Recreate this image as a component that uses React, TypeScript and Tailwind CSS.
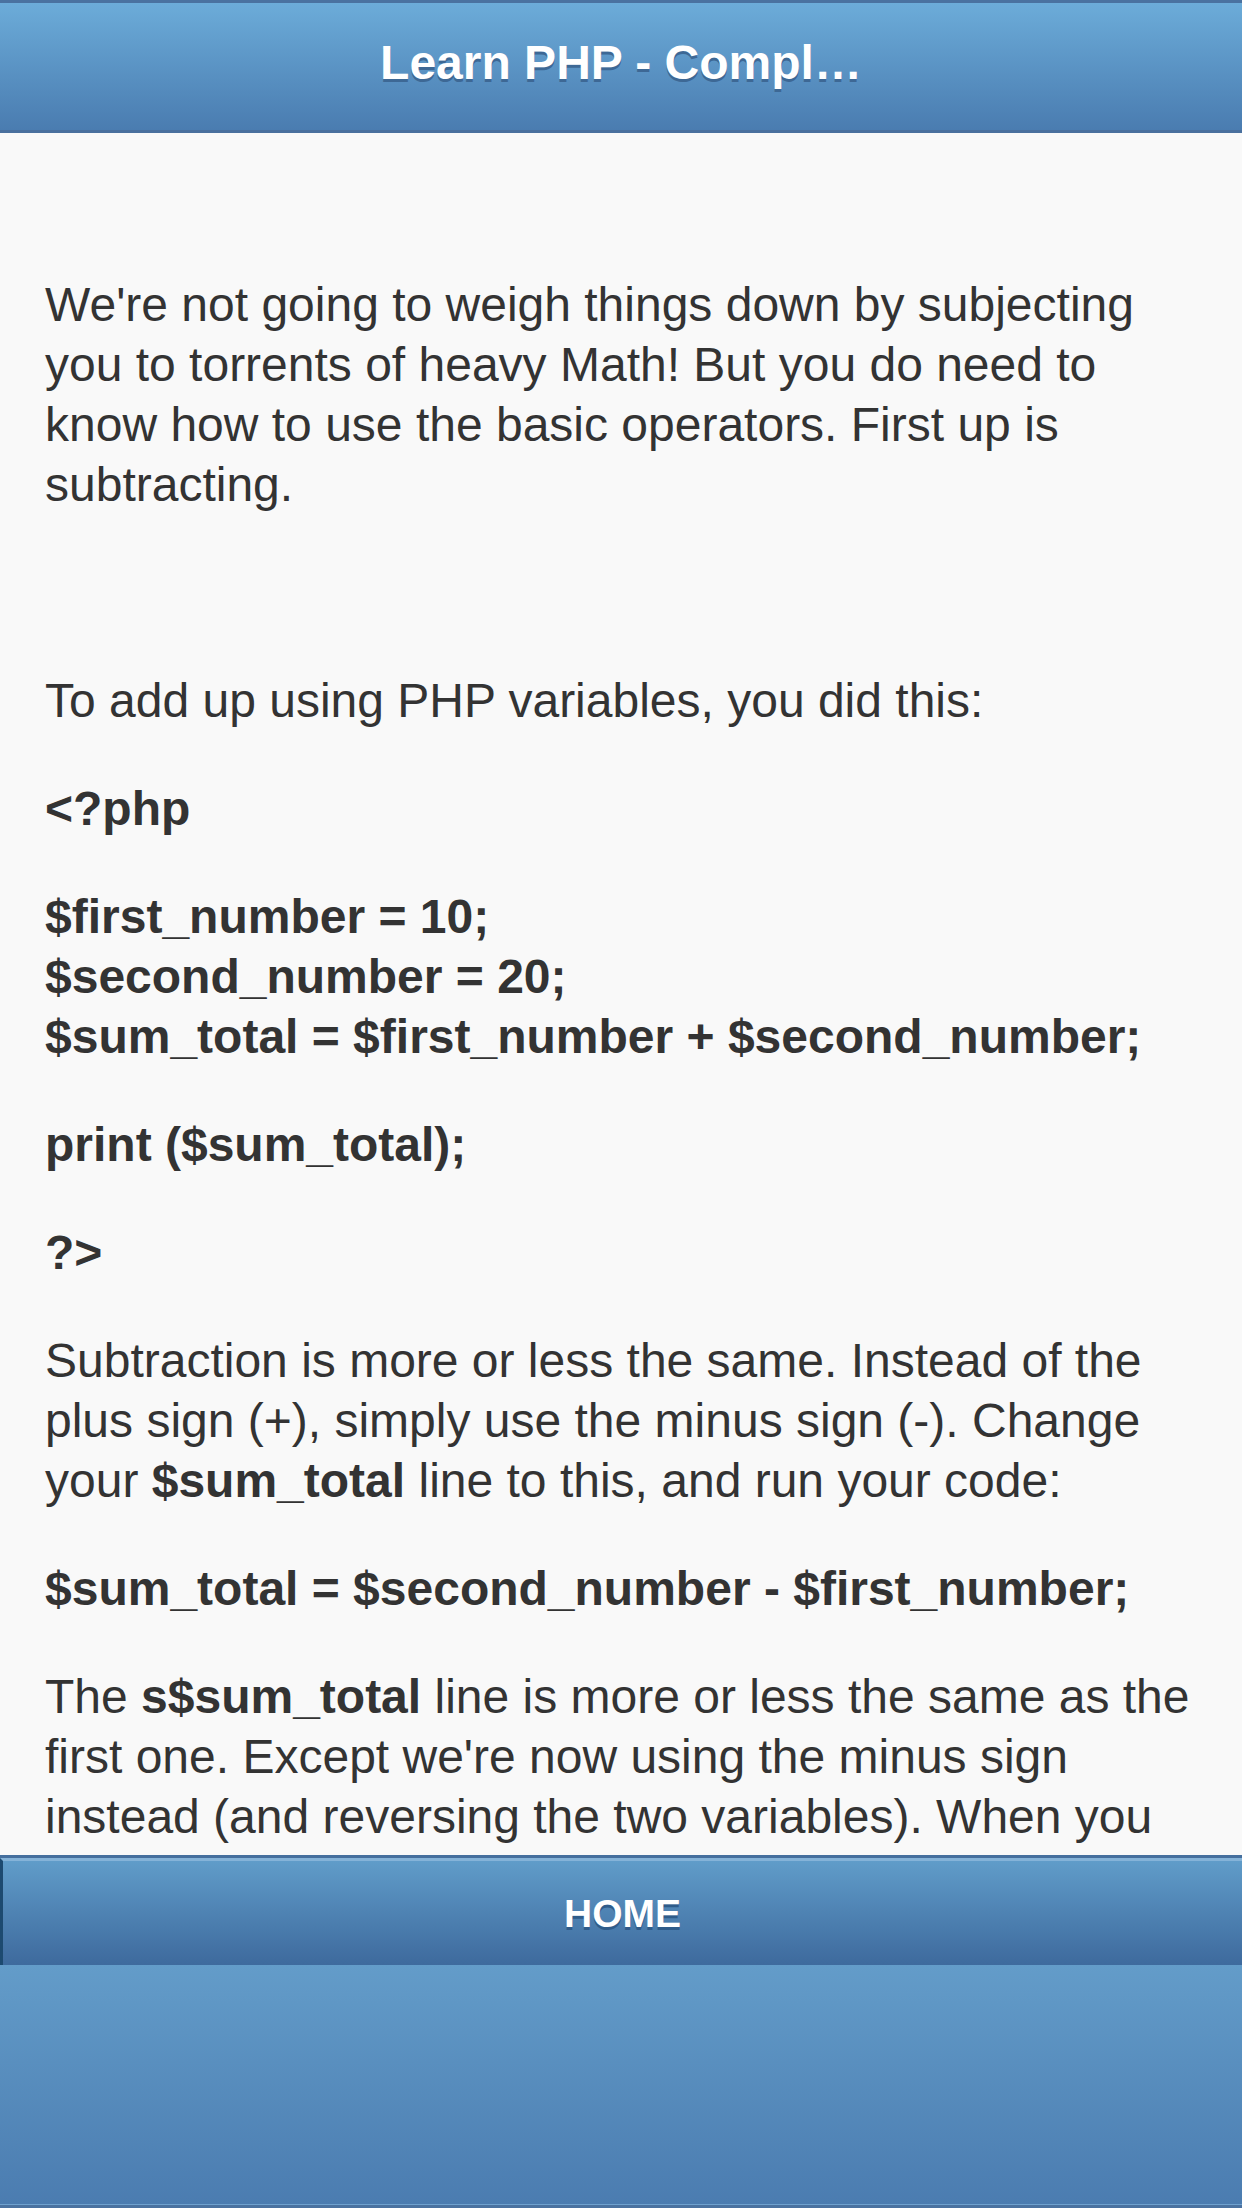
import React from 'react';

const Code: React.FC<{ children: React.ReactNode }> = ({ children }) => (
  <p className="mb-[48px] font-bold">{children}</p>
);

const App: React.FC = () => {
  return (
    <div className="h-[2208px] w-full flex flex-col overflow-hidden bg-[#f9f9f9] font-['Liberation_Sans',Arial,sans-serif]">
      {/* header bar */}
      <header className="h-[133px] shrink-0 flex items-center justify-center pb-[8px] border-y-[3px] border-t-[#4a72a0] border-b-[#4a709e] bg-gradient-to-b from-[#6cacd9] to-[#4a7cb0]">
        <h1 className="text-[48px] leading-none font-bold text-white [text-shadow:0_3px_0_#3d6895]">
          Learn PHP - Compl…
        </h1>
      </header>

      {/* page content */}
      <main className="flex-1 overflow-hidden pl-[45px] pr-[35px] pt-[142px] text-[48px] leading-[60px] text-[#333333]">
        <p className="mb-[48px]">
          We're not going to weigh things down by subjecting you to torrents of heavy Math! But you do
          need to know how to use the basic operators. First up is subtracting.
        </p>
        <p className="mb-[48px]">&nbsp;</p>
        <p className="mb-[48px]">To add up using PHP variables, you did this:</p>
        <Code>&lt;?php</Code>
        <Code>
          $first_number = 10;
          <br />
          $second_number = 20;
          <br />
          $sum_total = $first_number + $second_number;
        </Code>
        <Code>print ($sum_total);</Code>
        <Code>?&gt;</Code>
        <p className="mb-[48px]">
          Subtraction is more or less the same. Instead of the plus sign (+), simply use the minus sign
          (-). Change your <b>$sum_total</b> line to this, and run your code:
        </p>
        <Code>$sum_total = $second_number - $first_number;</Code>
        <p className="mb-[48px]">
          The <b>s$sum_total</b> line is more or less the same as the first one. Except we're now using
          the minus sign instead (and reversing the two variables). When you
        </p>
      </main>

      {/* fixed footer with navbar */}
      <footer className="h-[353px] shrink-0 flex flex-col border-t-[3px] border-[#456f9e]">
        <a className="h-[107px] flex items-center justify-center border-t-[3px] border-l-[3px] border-t-[#85b3d8] border-l-[#1d4a70] bg-gradient-to-b from-[#609cc9] to-[#3e6a9d]">
          <span className="text-[39px] leading-none font-bold text-white [text-shadow:0_3px_0_#2f5c8a]">
            HOME
          </span>
        </a>
        <div className="flex-1 border-b-[3px] border-[#4a72a0] shadow-[inset_0_-1px_0_#6fa2cf] bg-gradient-to-b from-[#639cc9] to-[#4b7cb0]" />
      </footer>
    </div>
  );
};

export default App;
